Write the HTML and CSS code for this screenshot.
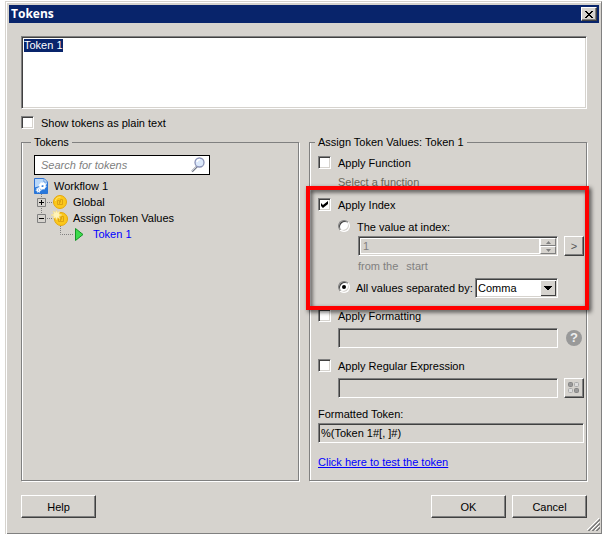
FILE: index.html
```html
<!DOCTYPE html>
<html lang="en">
<head>
<meta charset="utf-8">
<title>Tokens</title>
<link rel="stylesheet" href="styles.css">
</head>
<body>
<main class="window">
  <header class="titlebar">
    <h1>Tokens</h1>
    <button class="close" type="button" aria-label="Close">
      <svg width="8" height="7" viewBox="0 0 8 7" shape-rendering="crispEdges"><path d="M0 0h2v1h1v1h2V1h1V0h2v1H7v1H6v1H5v1h1v1h1v1h1v1H6V6H5V5H3v1H2v1H0V6h1V5h1V4h1V3H2V2H1V1H0z"/></svg>
    </button>
  </header>
  <form class="content">
    <textarea class="editor sunken" id="editor" aria-label="Token text" spellcheck="false">Token 1</textarea>
    <label class="check plain"><input type="checkbox"><span>Show tokens as plain text</span></label>

    <div class="panels">
      <fieldset class="panel">
        <legend>Tokens</legend>
        <div class="search">
          <input type="text" placeholder="Search for tokens" aria-label="Search for tokens">
          <svg width="16" height="16" viewBox="0 0 16 16"><path d="M2 14.5l5-5" stroke="#777c88" stroke-width="2"/><path d="M2 14l5-5" stroke="#c8ccd6"/><circle cx="9.5" cy="5.500" r="4.500" fill="#dce9fb" stroke="#8b93b8" stroke-width="1.300"/><path d="M7 5a3 3 0 0 1 3-2.500" fill="none" stroke="#fff" stroke-width="1.500"/></svg>
        </div>
        <ul class="tree">
          <li><svg width="16" height="16" viewBox="0 0 16 16"><path d="M.5.5H10L13.500 4v11.500H.5z" fill="#b9d8fa" stroke="#2f70cf"/><path d="M.5 9.500L13.500 6v9.500H.5z" fill="#2878dc"/><path d="M10 .5V4h3.500z" fill="#fff" stroke="#5c96df"/><circle cx="8.500" cy="8" r="2.200" fill="none" stroke="#fff" stroke-width="2.200"/><circle cx="8.500" cy="8" r="3.500" fill="none" stroke="#fff" stroke-dasharray="1.400 1.350"/><circle cx="4.500" cy="12" r="1.300" fill="none" stroke="#fff" stroke-width="1.600"/><circle cx="4.500" cy="12" r="2.300" fill="none" stroke="#fff" stroke-dasharray="1 .8"/></svg><span>Workflow 1</span></li>
          <li><svg width="36" height="16" viewBox="0 0 36 16"><path d="M7.500 0v16M13 8.500h7" stroke="#808080" stroke-dasharray="1 1"/><path d="M3.500 4.500h8v8h-8z" fill="#d6d3ce" stroke="#808080"/><path d="M5 8.500h5M7.500 6v5" stroke="#000"/><circle cx="26" cy="8" r="6.500" fill="#fbc81c" stroke="#e6a70a"/><path d="M21.500 7a5 5 0 0 1 5-4" fill="none" stroke="#ffe676"/><path d="M23.500 6.500h2v4h-2zM25.500 10.500h3v-5h-2v3" fill="none" stroke="#dda312"/></svg><span>Global</span></li>
          <li><svg width="36" height="16" viewBox="0 0 36 16"><path d="M7.500 0v4M13 8.500h7M26.500 14v2" stroke="#808080" stroke-dasharray="1 1"/><path d="M3.500 4.500h8v8h-8z" fill="#d6d3ce" stroke="#808080"/><path d="M5 8.500h5" stroke="#000"/><circle cx="27" cy="9" r="6.500" fill="#fbc81c" stroke="#e6a70a"/><path d="M24.500 7.500h2v4h-2zM26.500 11.500h3v-5h-2v3" fill="none" stroke="#dda312"/><path d="M22.500 0l1 2.500L26 1l-1 3 3 1-3 1 1 3-2.500-1.500L22.500 10l-1-2.500L19 9l1-3-3-1 3-1-1-3 2.500 1.500z" fill="#fff3b8" stroke="#f5dc7c" stroke-width=".5"/></svg><span>Assign Token Values</span></li>
          <li class="current"><svg width="53" height="16" viewBox="0 0 53 16"><path d="M26.500 0v8.500H39" fill="none" stroke="#808080" stroke-dasharray="1 1"/><path d="M41.500 2.500L49 8.500l-7.500 6z" fill="#3ddb4c" stroke="#159326"/></svg><span>Token 1</span></li>
        </ul>
      </fieldset>

      <fieldset class="panel">
        <legend>Assign Token Values: Token 1</legend>
        <section class="function">
          <label class="check"><input type="checkbox"><span>Apply Function</span></label>
          <p class="hint select-function">Select a function</p>
        </section>
        <section class="index">
          <label class="check"><input type="checkbox" checked><span>Apply Index</span></label>
          <label class="check option"><input type="radio" name="mode"><span>The value at index:</span></label>
          <div class="field inner">
            <div class="spin sunken">
              <input type="text" value="1" disabled aria-label="Index">
              <span class="arrows">
                <button type="button" disabled aria-label="Increase"><svg width="5" height="3" viewBox="0 0 5 3"><path d="M0 3h5L2.500 0z" fill="#808080"/></svg></button>
                <button type="button" disabled aria-label="Decrease"><svg width="5" height="3" viewBox="0 0 5 3"><path d="M0 0h5L2.500 3z" fill="#808080"/></svg></button>
              </span>
            </div>
            <button class="square raised" type="button" disabled>&gt;</button>
          </div>
          <p class="hint from"><span>from the</span><span>start</span></p>
          <div class="separator">
            <label class="check option"><input type="radio" name="mode" checked><span>All values separated by:</span></label>
            <select class="sunken" aria-label="Separator"><option>Comma</option></select>
          </div>
        </section>
        <section class="group">
          <label class="check"><input type="checkbox"><span>Apply Formatting</span></label>
          <div class="field">
            <input class="box sunken" type="text" disabled aria-label="Format">
            <button class="help" type="button" aria-label="Formatting help">?</button>
          </div>
        </section>
        <section class="group">
          <label class="check"><input type="checkbox"><span>Apply Regular Expression</span></label>
          <div class="field">
            <input class="box sunken" type="text" disabled aria-label="Regular expression">
            <button class="square raised" type="button" disabled aria-label="Expression builder"><svg width="12" height="12" viewBox="0 0 12 12"><rect x=".5" y=".5" width="4" height="4" rx="1" fill="#999" stroke="#858585"/><rect x="6.500" y=".5" width="4" height="4" rx="1" fill="#ddd" stroke="#aaa"/><rect x=".5" y="6.500" width="4" height="4" rx="1" fill="#ddd" stroke="#aaa"/><rect x="6.500" y="6.500" width="4" height="4" rx="1" fill="#999" stroke="#858585"/></svg></button>
          </div>
        </section>
        <label class="caption" for="result">Formatted Token:</label>
        <input class="box sunken result" id="result" type="text" readonly value="%(Token 1#[, ]#)">
        <a class="test" href="#test">Click here to test the token</a>
      </fieldset>
    </div>

    <footer class="actions">
      <button class="raised" type="button">Help</button>
      <button class="raised ok" type="button">OK</button>
      <button class="raised" type="button">Cancel</button>
    </footer>
  </form>
  <svg class="grip" width="13" height="13" viewBox="0 0 13 13"><path d="M0 12L12 0M4 12l8-8M8 12l4-4" stroke="#fff"/><path d="M1 13L13 1M2 13L13 2M5 13l8-8M6 13l7-7M9 13l4-4M10 13l3-3" stroke="#808080"/></svg>
</main>
<script src="main.js"></script>
</body>
</html>
```
FILE: styles.css
```css
* { box-sizing: border-box; }

:root {
  --face: #d6d3ce;
  --shade: #808080;
  --dark: #404040;
  --navy: #08246b;
}

body {
  margin: 0;
  padding: 1px 0 0 5px;
  background: #fff;
  color: #000;
  font: 11px/14px "Liberation Sans", Arial, sans-serif;
}

button, input, select, textarea {
  margin: 0;
  font: inherit;
  color: inherit;
  outline: none;
}

button { padding: 0; }

p, h1, ul { margin: 0; padding: 0; }

.window {
  position: relative;
  padding: 2px 1px 3px 2px;
  background: var(--face);
  border: 1px solid;
  border-color: var(--face) var(--shade) var(--dark) var(--face);
  box-shadow: inset 1px 1px #fff, inset 0 -1px var(--shade);
}

.titlebar {
  display: flex;
  align-items: center;
  justify-content: space-between;
  height: 18px;
  margin: 1px;
  padding: 0 2px;
  background: var(--navy);
  color: #fff;
}

.titlebar h1 { font: bold 12px/16px "Open Sans", sans-serif; }

.close {
  display: flex;
  align-items: center;
  justify-content: center;
  width: 16px;
  height: 14px;
  background: var(--face);
  border: 1px solid;
  border-color: #fff var(--dark) var(--dark) #fff;
  box-shadow: inset -1px -1px var(--shade);
  color: #000;
}

.content { padding: 12px 13px 13px; }

.sunken {
  border: 1px solid;
  border-color: var(--shade) #fff #fff var(--shade);
  border-radius: 0;
  box-shadow: inset 1px 1px var(--dark), inset -1px -1px var(--face);
}

.raised {
  background: var(--face);
  border: 1px solid;
  border-color: #fff var(--dark) var(--dark) #fff;
  border-radius: 0;
  box-shadow: inset -1px -1px var(--shade);
}

.editor {
  display: block;
  width: 100%;
  height: 73px;
  padding: 2px;
  background: #fff;
  line-height: 13px;
  resize: none;
}

.editor::selection { background: var(--navy); color: #fff; }

.check {
  display: flex;
  align-items: flex-start;
  gap: 7px;
  height: 14px;
  white-space: nowrap;
}

.check input {
  appearance: none;
  flex: none;
  width: 13px;
  height: 13px;
  background: #fff;
  border: 1px solid;
  border-color: var(--shade) #fff #fff var(--shade);
  box-shadow: inset 1px 1px var(--dark), inset -1px -1px var(--face);
}

.check input[type="checkbox"]:checked::before {
  content: "";
  display: block;
  width: 7px;
  height: 7px;
  margin: 2px;
  background: #000;
  clip-path: polygon(0 28%, 28% 57%, 100% 0, 100% 43%, 28% 100%, 0 71%);
}

.check input[type="radio"] {
  display: grid;
  place-items: center;
  width: 12px;
  height: 12px;
  border-radius: 50%;
}

.check input[type="radio"]:checked::before {
  content: "";
  width: 4px;
  height: 4px;
  border-radius: 50%;
  background: #000;
}

.plain { margin-top: 7px; }

.panels {
  display: grid;
  grid-template-columns: 1fr 1fr;
  gap: 10px;
  margin-top: 5px;
}

.panel {
  min-width: 0;
  margin: 0;
  padding: 0 2px 11px 8px;
  border: 1px solid var(--shade);
  box-shadow: 1px 1px #fff, inset 1px 0 #fff;
}

.panel legend {
  height: 14px;
  margin-left: -3px;
  padding: 0 3px;
  background: var(--face);
}

.panel:first-child { padding-left: 12px; }

.search {
  display: flex;
  align-items: center;
  width: 176px;
  height: 20px;
  margin-top: 6px;
  padding: 0 3px 0 6px;
  background: #fff;
  border: 1px solid #000;
}

.search input {
  flex: 1;
  min-width: 0;
  padding: 0;
  background: none;
  border: 0;
  font-style: italic;
}

.search input::placeholder { color: #808080; }

.tree { margin-top: 3px; list-style: none; }

.tree li {
  display: flex;
  align-items: center;
  gap: 3px;
  height: 16px;
}

.tree li:first-child { gap: 4px; }

.tree .current { gap: 6px; color: #00f; }

.function { padding-top: 7px; }

.hint { color: var(--shade); }

.select-function {
  margin: 5px 0 0 20px;
  color: #69675a;
}

.index {
  position: relative;
  padding-top: 9px;
}

/* Highlight frame drawn over the index options */
.index::after {
  content: "";
  position: absolute;
  inset: -3px -5px -12px -12px;
  border: 4px solid #f00;
  filter: drop-shadow(2px 2px 2px rgb(0 0 0 / 70%));
  pointer-events: none;
}

.option { margin: 8px 0 0 20px; }

.field {
  display: flex;
  align-items: center;
  gap: 6px;
  height: 20px;
  margin: 5px 0 0 20px;
}

.inner { margin: 2px 0 0 40px; }

.spin {
  display: flex;
  flex: 1;
  height: 20px;
  padding: 1px;
}

.spin input {
  flex: 1;
  min-width: 0;
  padding: 0 2px;
  background: none;
  border: 1px solid #fff;
  color: var(--shade);
}

.arrows {
  display: grid;
  grid-template-rows: 1fr 1fr;
  width: 16px;
}

.arrows button {
  display: grid;
  place-items: center;
  min-height: 0;
  background: var(--face);
  border: 1px solid;
  border-color: #fff var(--shade) var(--shade) #fff;
}

.square {
  display: grid;
  place-items: center;
  width: 20px;
  height: 20px;
  color: #555;
}

.from {
  display: flex;
  gap: 8px;
  margin: 3px 0 0 40px;
}

.separator {
  display: flex;
  align-items: center;
  justify-content: space-between;
  height: 20px;
  margin: 5px 26px 0 0;
}

.separator .option { gap: 6px; margin-top: 0; }

.separator select {
  appearance: none;
  width: 83px;
  height: 20px;
  padding: 0 18px 0 2px;
  background:
    conic-gradient(from -45deg at 50% 100%, #000 90deg, transparent 0) right 5px top 7px / 8px 4px no-repeat,
    linear-gradient(var(--face), var(--face)) right 2px top 2px / 14px 14px no-repeat,
    linear-gradient(var(--dark), var(--dark)) right 1px top 2px / 15px 15px no-repeat,
    #fff;
}

.group { margin-top: 11px; }

.box {
  flex: 1;
  min-width: 0;
  height: 20px;
  padding: 0 2px;
  background: var(--face);
}

.help {
  width: 16px;
  height: 16px;
  margin: 0 2px;
  background: #999;
  border: 0;
  border-radius: 50%;
  color: #eee;
  font: bold 13px/16px "Liberation Sans", sans-serif;
}

.caption {
  display: block;
  margin-top: 9px;
}

.result {
  display: block;
  width: 100%;
  margin-top: 2px;
}

.test {
  display: block;
  width: max-content;
  margin-top: 12px;
  color: #00f;
}

.actions {
  display: flex;
  gap: 6px;
  margin-top: 14px;
}

.actions button { width: 75px; height: 23px; }

.ok { margin-left: auto; }

.grip {
  position: absolute;
  right: 1px;
  bottom: 3px;
}
```
FILE: main.js
```js
const editor = document.getElementById("editor");
editor.focus();
editor.select();
```
